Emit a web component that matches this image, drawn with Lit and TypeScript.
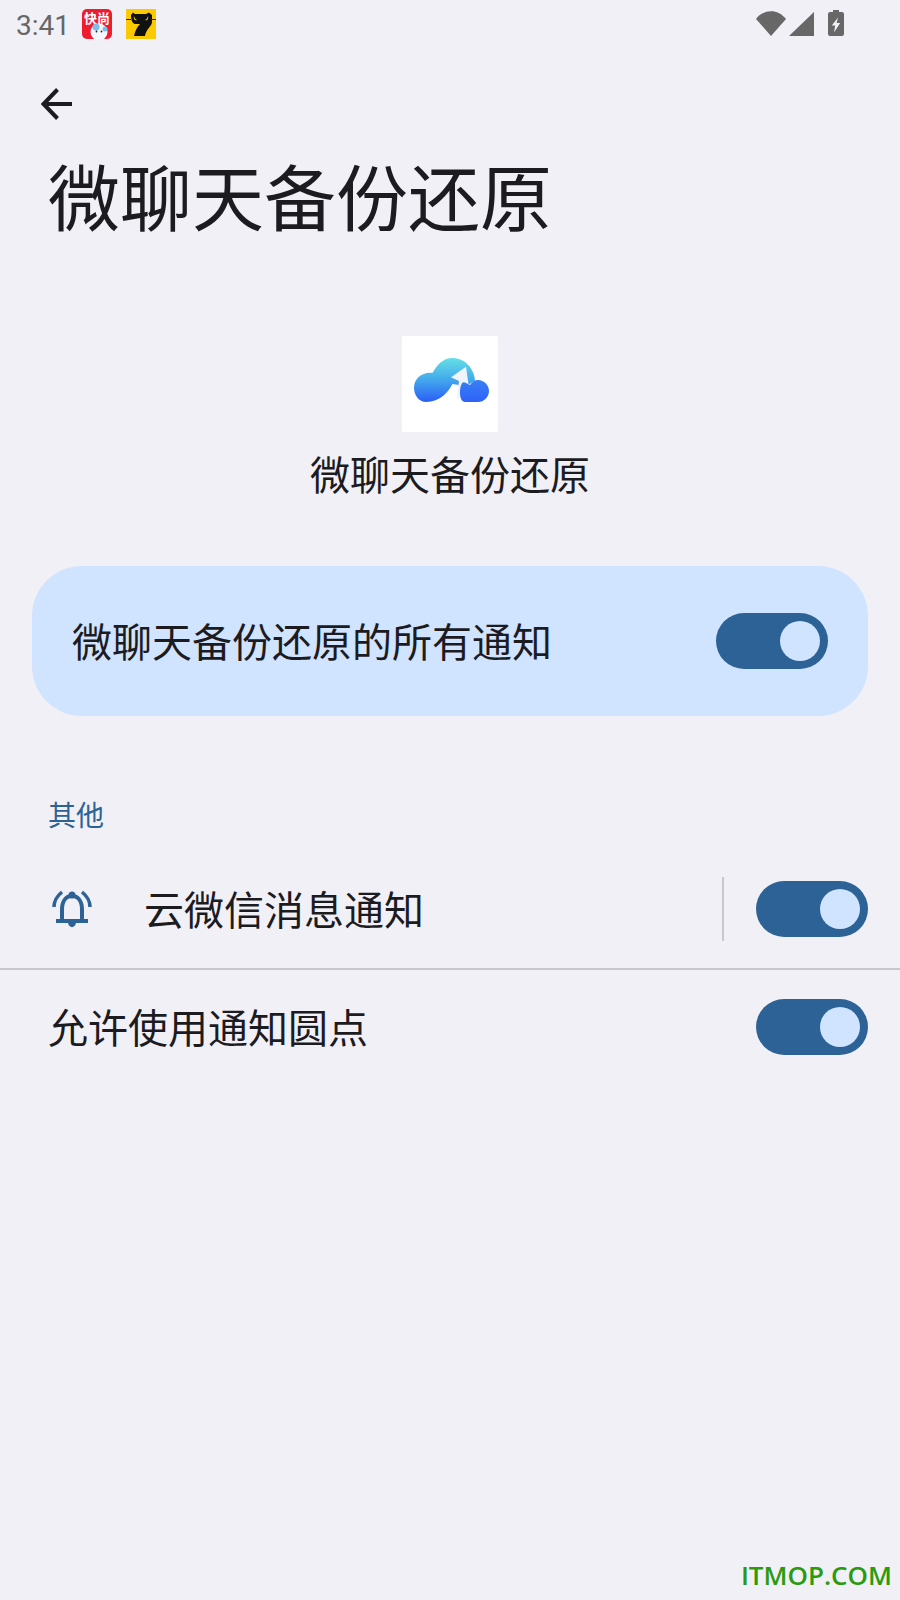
import { LitElement, html, css } from "lit";
import { customElement } from "lit/decorators.js";

@customElement("app-toggle")
class AppToggle extends LitElement {
  static styles = css`
    :host { display: block; flex: none; }
    .track { width: 112px; height: 56px; border-radius: 28px; background: #2d6296; display: flex; align-items: center; justify-content: flex-end; padding-right: 8px; box-sizing: border-box; }
    .dot { width: 40px; height: 40px; border-radius: 50%; background: #d0e3ff; }
  `;
  render() {
    return html`<div class="track"><div class="dot"></div></div>`;
  }
}

@customElement("app-root")
class AppRoot extends LitElement {
  static styles = css`
    :host { display: block; position: relative; width: 900px; height: 1600px; overflow: hidden; background: #f1f0f6; font-family: "Noto Sans CJK SC", "Noto Sans", sans-serif; color: #1c1b1f; }
    .status { height: 50px; display: flex; align-items: center; padding: 0 0 0 16px; box-sizing: border-box; }
    .time { font: 400 28px Roboto, sans-serif; color: #676767; width: 66px; }
    .app-ic { width: 30px; height: 30px; margin-right: 14px; display: block; margin-top: -2px; }
    .spacer { flex: 1; }
    .sys { display: flex; align-items: flex-start; margin-right: 56px; margin-bottom: 4px; }
    .sys svg { display: block; }
    .wifi { width: 30px; height: 25px; margin-right: 3px; margin-top: 1px; }
    .cell { width: 25px; height: 24px; margin-right: 14px; margin-top: 2px; }
    .batt { width: 16px; height: 26px; }
    .back { display: block; margin: 36px 0 0 39px; width: 36px; height: 36px; }
    h1 { margin: 0; padding: 0 0 0 48px; font-size: 72px; font-weight: 400; line-height: 104px; margin-top: 20px; }
    .app { display: flex; flex-direction: column; align-items: center; margin-top: 90px; }
    .logo { width: 96px; height: 96px; background: #fff; display: block; }
    .app-name { font-size: 40px; line-height: 58px; margin-top: 12px; margin-bottom: 3px; }
    .card { margin: 61px 32px 0; height: 150px; border-radius: 50px; background: #d0e3ff; display: flex; align-items: center; justify-content: space-between; padding: 0 40px; }
    .label { font-size: 40px; line-height: 58px; padding-bottom: 2px; }
    .section { font-size: 28px; line-height: 40px; color: #2d6296; margin: 78px 0 0 48px; }
    .row { display: flex; align-items: center; padding: 0 32px 0 48px; }
    .row1 { height: 118px; margin-top: 16px; }
    .bell { width: 48px; height: 48px; margin-right: 48px; display: block; flex: none; }
    .row1 .label { flex: 1; }
    .vline { width: 2px; height: 64px; background: #c8c7cc; margin-right: 32px; }
    .hline { height: 2px; background: #c8c7cc; }
    .row2 { height: 114px; justify-content: space-between; }
    .mark { position: absolute; right: 8px; bottom: 5px; font: 600 26px "Open Sans", sans-serif; color: #2a9a0f; line-height: 40px; }
  `;

  render() {
    return html`
      <div class="status">
        <div class="time">3:41</div>
        <svg class="app-ic" viewBox="0 0 30 30">
          <rect width="30" height="30" rx="5" fill="#ee1c2e"/>
          <text x="15" y="13.500" font-size="13" font-weight="700" fill="#fff" text-anchor="middle" font-family="Noto Sans CJK SC">快尚</text>
          <circle cx="17" cy="23" r="8.500" fill="#f4f8fc"/>
          <circle cx="14" cy="18" r="3.500" fill="#7dbcec"/>
          <circle cx="23" cy="20" r="2.500" fill="#7dbcec"/>
          <circle cx="14.500" cy="22.500" r="0.900" fill="#222"/>
          <circle cx="19.500" cy="22.500" r="0.900" fill="#222"/>
        </svg>
        <svg class="app-ic" viewBox="0 0 30 30">
          <rect width="30" height="30" fill="#fdc900"/>
          <path d="M5 6 L7 3.500 L9 5 H20 L23 3.500 L26 6 V13 C26 17 20 20 19 27 H8 C9 22 11 18 14 15 H9 C6 14 5 11 5 6 Z" fill="#111"/>
          <path d="M8 7 C7 10 9 12 11 11 C9 10 8.500 9 8 7 Z M22 7 C23 10 21 12 19 11 C21 10 21.500 9 22 7 Z" fill="#f5d020"/>
          <path d="M0 10.500 H5 M25 10.500 H30" stroke="#222" stroke-width="1"/>
        </svg>
        <div class="spacer"></div>
        <div class="sys">
          <svg class="wifi" viewBox="0 0 30 25"><path d="M0 8 C8 -2.500 22 -2.500 30 8 L15 25 Z" fill="#676767"/></svg>
          <svg class="cell" viewBox="0 0 25 24"><path d="M25 0 V24 H0 Z" fill="#676767"/></svg>
          <svg class="batt" viewBox="0 0 16 26"><path d="M5 0 H11 V2 H14 Q16 2 16 4 V24 Q16 26 14 26 H2 Q0 26 0 24 V4 Q0 2 2 2 H5 Z" fill="#676767"/><path d="M10 7.500 L3.800 15.500 H7.200 L6 22.500 L12.200 13 H8.600 Z" fill="#f1f0f6"/></svg>
        </div>
      </div>
      <svg class="back" viewBox="0 0 36 36"><path d="M33 18 H5 M18.500 3.500 L4.500 18 L18.500 32.500" fill="none" stroke="#1c1b1f" stroke-width="4"/></svg>
      <h1>微聊天备份还原</h1>
      <div class="app">
        <svg class="logo" viewBox="0 0 96 96">
          <defs>
            <linearGradient id="b" gradientUnits="userSpaceOnUse" x1="0" y1="22" x2="0" y2="66"><stop offset="0" stop-color="#66e0e6"/><stop offset="0.45" stop-color="#45aeeb"/><stop offset="1" stop-color="#2a5ef8"/></linearGradient>
            <linearGradient id="c" x1="0" y1="0" x2="0" y2="1"><stop offset="0" stop-color="#3a7ff5"/><stop offset="1" stop-color="#2e62f8"/></linearGradient>
          </defs>
          <path d="M30 38 C35 28 42 22 50 22 C63 22 72 32 73 45 L64 50 L50 48 Z" fill="url(#b)"/>
          <path d="M12 52 C12 43 19 36.700 28 36.700 C36 36.700 42 39 49 41.300 L52 45 C47 56 38 66 24 66 C17 66 12 59 12 52 Z" fill="url(#b)"/>
          <path d="M64 30.700 L49 41.300 L57 45 L54.500 64 L60 60 L66.500 48 Z" fill="#eef4fa"/>
          <path d="M58 57 C58 52 59 47 61.500 46.300 C64 46 66 49 68 49 C70 46 73 44 76 44 C82 44 87 49 87 55 C87 61 82 66 76 66 H63 C60 66 58 62 58 57 Z" fill="url(#c)"/>
        </svg>
        <div class="app-name">微聊天备份还原</div>
      </div>
      <div class="card">
        <div class="label">微聊天备份还原的所有通知</div>
        <app-toggle></app-toggle>
      </div>
      <div class="section">其他</div>
      <div class="row row1">
        <svg class="bell" viewBox="0 0 48 48" fill="none" stroke="#2d6296">
          <path d="M8 36 H40" stroke-width="4"/>
          <path d="M14 36 V25 C14 16 18 11 24 11 C30 11 34 16 34 25 V36" stroke-width="4"/>
          <circle cx="24" cy="10" r="3.500" fill="#2d6296" stroke="none"/>
          <path d="M20 38 H28 C27 43.500 21 43.500 20 38 Z" fill="#2d6296" stroke="none"/>
          <path d="M6 22 C6 15 9 11 14 7 M42 22 C42 15 39 11 34 7" stroke-width="3.500"/>
        </svg>
        <div class="label">云微信消息通知</div>
        <div class="vline"></div>
        <app-toggle></app-toggle>
      </div>
      <div class="hline"></div>
      <div class="row row2">
        <div class="label">允许使用通知圆点</div>
        <app-toggle></app-toggle>
      </div>
      <div class="mark">ITMOP.COM</div>
    `;
  }
}
